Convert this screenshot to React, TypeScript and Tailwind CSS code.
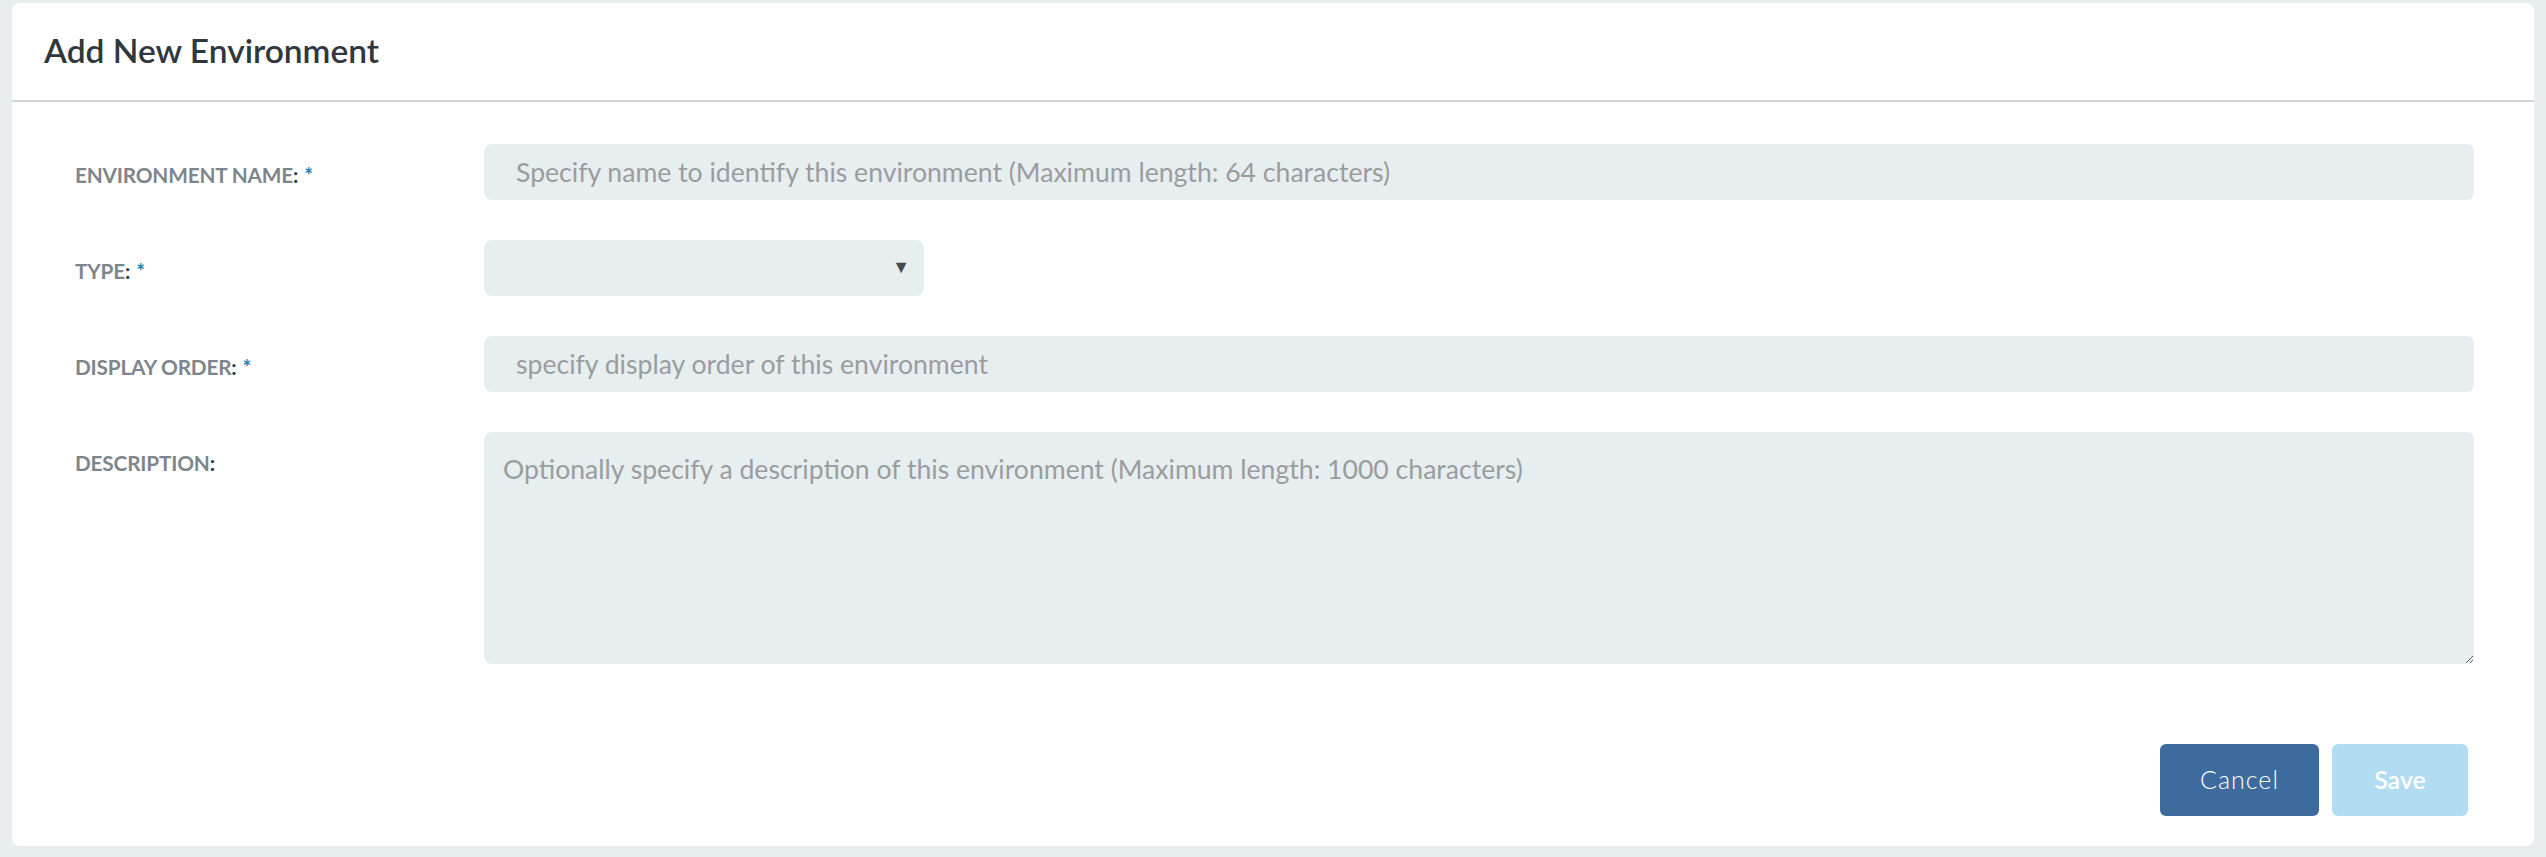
import { useState } from 'react';

const fontStack = { fontFamily: '"Source Sans Pro", Lato, "Noto Sans", sans-serif' };

function Label({ text, required }: { text: string; required?: boolean }) {
  return (
    <div className="w-[409px] shrink-0 h-[56px] pt-[5px] flex items-center text-[20.8px] font-bold uppercase text-[#7d868c] tracking-[-0.2px]">
      {text}
      <span className="text-[#333b40]">:</span>
      {required && <span className="ml-[6px] text-[#1c7fb6]">*</span>}
    </div>
  );
}

export default function App() {
  const [name, setName] = useState('');
  const [type, setType] = useState('');
  const [order, setOrder] = useState('');
  const [desc, setDesc] = useState('');

  return (
    <div className="min-h-[857px] bg-[#e8eef0] pt-[3px] px-[12px] pb-[11px]" style={fontStack}>
      <div className="bg-white rounded-[8px] h-[843px] flex flex-col">
        {/* header */}
        <div className="h-[99px] flex items-center px-[32px] border-b-2 border-[#cfd5da]">
          <h1 className="text-[33.5px] font-semibold text-[#2f383c] pb-[2px]">Add New Environment</h1>
        </div>

        {/* form body */}
        <div className="flex flex-col gap-[40px] pt-[42px] pl-[63px] pr-[60px]">
          <div className="flex">
            <Label text="Environment name" required />
            <input
              value={name}
              onChange={(e) => setName(e.target.value)}
              placeholder="Specify name to identify this environment (Maximum length: 64 characters)"
              className="flex-1 h-[56px] rounded-[8px] bg-[#e7eef0] px-[32px] text-[26.6px] text-[#555] placeholder:text-[#9a9d9f] outline-none"
            />
          </div>

          <div className="flex">
            <Label text="Type" required />
            <div className="relative w-[440px] h-[56px]">
              <select
                value={type}
                onChange={(e) => setType(e.target.value)}
                className="w-full h-full rounded-[8px] bg-[#e7eef0] px-[32px] text-[26.6px] text-[#555] appearance-none outline-none"
              >
                <option value=""></option>
                <option value="dev">Development</option>
                <option value="test">Test</option>
                <option value="prod">Production</option>
              </select>
              <span className="absolute right-[14px] top-[17px] text-[18px] leading-none text-[#444a4e] pointer-events-none">
                ▼
              </span>
            </div>
          </div>

          <div className="flex">
            <Label text="Display order" required />
            <input
              value={order}
              onChange={(e) => setOrder(e.target.value)}
              placeholder="specify display order of this environment"
              className="flex-1 h-[56px] rounded-[8px] bg-[#e7eef0] px-[32px] text-[26.6px] text-[#555] placeholder:text-[#9a9d9f] outline-none"
            />
          </div>

          <div className="flex">
            <Label text="Description" />
            <textarea
              value={desc}
              onChange={(e) => setDesc(e.target.value)}
              placeholder="Optionally specify a description of this environment (Maximum length: 1000 characters)"
              className="flex-1 h-[232px] rounded-[8px] bg-[#e7eef0] px-[19px] pt-[18px] text-[26.6px] text-[#555] placeholder:text-[#9a9d9f] outline-none"
            />
          </div>
        </div>

        {/* actions */}
        <div className="flex justify-end gap-[13px] pt-[80px] pr-[66px]">
          <button className="w-[159px] h-[72px] rounded-[6px] bg-[#3d6b9d] text-white text-[25px] font-light tracking-[1px]">
            Cancel
          </button>
          <button className="w-[136px] h-[72px] rounded-[6px] bg-[#b1dcf1] text-white text-[25px] font-semibold">
            Save
          </button>
        </div>
      </div>
    </div>
  );
}
